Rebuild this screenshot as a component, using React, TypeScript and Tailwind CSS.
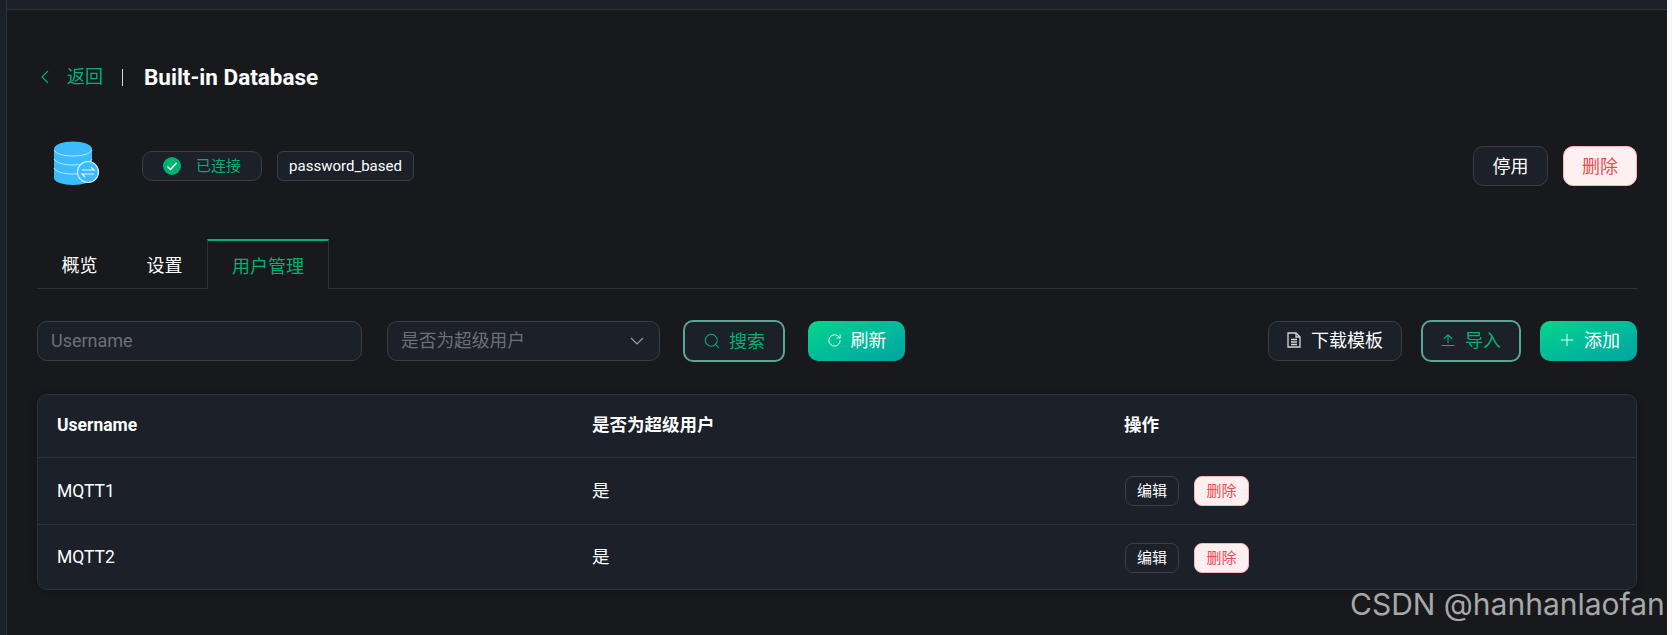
import { Plus, RotateCw, Search } from "lucide-react";

const FONT = "font-['Roboto','Noto_Sans_CJK_SC',sans-serif]";

function DbIcon() {
  return (
    <svg width="48" height="46" viewBox="0 0 48 46" fill="none">
      <path
        d="M1 9C1 4.5 10 1.5 20 1.5S39 4.5 39 9V38C39 42 30 45 20 45S1 42 1 38Z"
        fill="#3DBBFF"
      />
      <path d="M1 10c2 4 10 6 19 6s17-2 19-6" stroke="#BFE8FF" strokeWidth="1" />
      <path d="M1 19c2 4 10 6 19 6s17-2 19-6" stroke="#BFE8FF" strokeWidth="1" />
      <path d="M1 28c2 4 10 6 19 6s10-1 14-3" stroke="#BFE8FF" strokeWidth="1" />
      <circle cx="35" cy="32" r="10.5" fill="#3DBBFF" stroke="#D6F0FF" strokeWidth="1.2" />
      <path d="M29 30h12l-3-3M41 34H29l3 3" stroke="#EAF8FF" strokeWidth="1.2" />
    </svg>
  );
}

function CheckBadge() {
  return (
    <svg width="18" height="18" viewBox="0 0 18 18">
      <circle cx="9" cy="9" r="9" fill="#00B173" />
      <path d="M4.5 9.5l3 3 6-6.5" fill="none" stroke="#fff" strokeWidth="1.4" />
    </svg>
  );
}

function FileIcon() {
  return (
    <svg width="14" height="16" viewBox="0 0 14 16" fill="none" stroke="#D5D6D8" strokeWidth="1.3">
      <path d="M1 1h8l4 4v10H1Z" />
      <path d="M9 1v4h4M4 7.5h6M4 10h6M4 12.5h6" />
    </svg>
  );
}

function UploadIcon() {
  return (
    <svg width="14" height="14" viewBox="0 0 14 14" fill="none" stroke="#00B173" strokeWidth="1.1">
      <path d="M0.5 12.5h13M7 10V2M2.8 6L7 1.8 11.2 6" />
    </svg>
  );
}

function ChevronLeft() {
  return (
    <svg width="8" height="14" viewBox="0 0 8 14" fill="none" stroke="#00B173" strokeWidth="1.1">
      <path d="M7 1L1 7l6 6" />
    </svg>
  );
}

function ChevronDown() {
  return (
    <svg width="14" height="8" viewBox="0 0 14 8" fill="none" stroke="#9a9ca0" strokeWidth="1.2">
      <path d="M1 1l6 6 6-6" />
    </svg>
  );
}

const rows = ["MQTT1", "MQTT2"];

export default function App() {
  return (
    <div className={`relative flex h-[635px] w-[1672px] overflow-hidden bg-[#17191d] text-white ${FONT}`}>
      {/* sidebar sliver */}
      <div className="w-[7px] shrink-0 border-r border-[#2e323a] bg-[#1b2029]" />

      <div className="flex min-w-0 flex-1 flex-col">
        {/* header sliver */}
        <div className="h-[10px] shrink-0 border-b border-[#2e323a] bg-[#1b2029]" />

        <div className="flex flex-1 flex-col pl-[30px] pr-[30px]">
          {/* back + title */}
          <div className="mt-[53px] flex h-[28px] items-center">
            <span className="ml-[4px] flex"><ChevronLeft /></span>
            <span className="ml-[18px] text-[18px] leading-none text-[#00b173]">返回</span>
            <span className="ml-[19px] h-[17px] w-px bg-[#d8d8d8]" />
            <span className="ml-[21px] text-[22.5px] font-bold leading-none">Built-in Database</span>
          </div>

          {/* summary */}
          <div className="mt-[53px] flex h-[44px] items-center">
            <span className="ml-[16px] mt-[-7px] flex"><DbIcon /></span>
            <div className="ml-[41px] flex h-[30px] w-[120px] items-center rounded-[10px] border border-[#3a3e46] bg-[#1b2029] pl-[20px]">
              <CheckBadge />
              <span className="ml-[15px] text-[15px] text-[#00b173]">已连接</span>
            </div>
            <div className="ml-[15px] flex h-[30px] w-[137px] items-center justify-center rounded-[6px] border border-[#3a3e46] bg-[#1b2029] text-[15px]">
              password_based
            </div>
            <button className="ml-auto h-[40px] w-[75px] rounded-[10px] border border-[#383c44] bg-[#1b2029] text-[18px]">
              停用
            </button>
            <button className="ml-[15px] h-[40px] w-[74px] rounded-[10px] border border-[#fab6b6] bg-[#fef0f0] text-[18px] text-[#ee4b50]">
              删除
            </button>
          </div>

          {/* tabs */}
          <div className="mt-[51px] flex h-[50px] border-b border-[#2e323a] text-[18px]">
            <div className="flex h-[49px] w-[85px] items-center justify-center pt-[4px]">概览</div>
            <div className="flex h-[49px] w-[85px] items-center justify-center pt-[4px]">设置</div>
            <div className="flex h-[50px] w-[122px] items-center justify-center border-x border-t-2 border-x-[#2e323a] border-t-[#00b173] bg-[#17191d] pt-[2px] text-[#00b173]">
              用户管理
            </div>
          </div>

          {/* filters */}
          <div className="mt-[31px] flex h-[42px] items-center">
            <div className="flex h-[40px] w-[325px] items-center rounded-[10px] border border-[#3a3e46] bg-[#1b2029] pb-[2px] pl-[13px] text-[18px] text-[#6e7075]">
              Username
            </div>
            <div className="ml-[25px] flex h-[40px] w-[273px] items-center justify-between rounded-[10px] border border-[#3a3e46] bg-[#1b2029] pl-[13px] pr-[15px] text-[17.7px] text-[#6e7075]">
              是否为超级用户
              <ChevronDown />
            </div>
            <button className="ml-[23px] flex h-[42px] w-[102px] items-center justify-center gap-[8px] rounded-[10px] border-2 border-[#5aa593] bg-[#1b2029] text-[18px] text-[#00b173]">
              <Search size={18} strokeWidth={1.4} />
              搜索
            </button>
            <button className="ml-[23px] flex h-[40px] w-[97px] items-center justify-center gap-[9px] rounded-[10px] bg-gradient-to-br from-[#0ad58b] to-[#00a3a3] pb-[2px] text-[18px]">
              <RotateCw size={15} strokeWidth={1.4} />
              刷新
            </button>
            <button className="ml-auto flex h-[40px] w-[134px] items-center justify-center gap-[10px] rounded-[10px] border border-[#3a3e46] bg-[#1b2029] pb-[2px] text-[18px]">
              <FileIcon />
              下载模板
            </button>
            <button className="ml-[19px] flex h-[42px] w-[100px] items-center justify-center gap-[10px] rounded-[10px] border-2 border-[#5aa593] bg-[#1b2029] pb-[2px] text-[18px] text-[#00b173]">
              <UploadIcon />
              导入
            </button>
            <button className="ml-[19px] flex h-[40px] w-[97px] items-center justify-center gap-[7px] rounded-[10px] bg-gradient-to-br from-[#0ad58b] to-[#00a3a3] pb-[2px] text-[18px]">
              <Plus size={20} strokeWidth={1.1} />
              添加
            </button>
          </div>

          {/* table */}
          <div className="mt-[32px] flex h-[196px] flex-col rounded-[10px] border border-[#2c313a] bg-[#1b2029] text-[17.5px] shadow-[0_2px_8px_rgba(0,0,0,0.25)]">
            <div className="grid h-[63px] grid-cols-[535px_532px_1fr] items-center border-b border-[#2e323a] pb-[2px] pl-[19px] font-bold">
              <span>Username</span>
              <span>是否为超级用户</span>
              <span>操作</span>
            </div>
            {rows.map((name, i) => (
              <div
                key={name}
                className={`grid grid-cols-[535px_532px_1fr] items-center pl-[19px] ${
                  i === 0 ? "h-[67px] border-b border-[#2e323a]" : "flex-1"
                }`}
              >
                <span>{name}</span>
                <span>是</span>
                <div className={`ml-px flex items-center gap-[15px] ${i === 1 ? "mt-[2px]" : ""}`}>
                  <button className="h-[30px] w-[54px] rounded-[8px] border border-[#3a3e46] bg-[#1b2029] text-[15px]">
                    编辑
                  </button>
                  <button className="h-[30px] w-[55px] rounded-[8px] border border-[#fab6b6] bg-[#fef0f0] text-[15px] text-[#ee4b50]">
                    删除
                  </button>
                </div>
              </div>
            ))}
          </div>
        </div>
      </div>

      {/* page edge */}
      <div className="w-[5px] shrink-0 bg-[#f7f7f7]" />

      {/* csdn watermark baked into the screenshot */}
      <div className="absolute left-[1350px] top-[584px] whitespace-nowrap font-['Inter',sans-serif] text-[30px] leading-[40px] text-[#a8a8a8]">
        CSDN @hanhanlaofan
      </div>
    </div>
  );
}
